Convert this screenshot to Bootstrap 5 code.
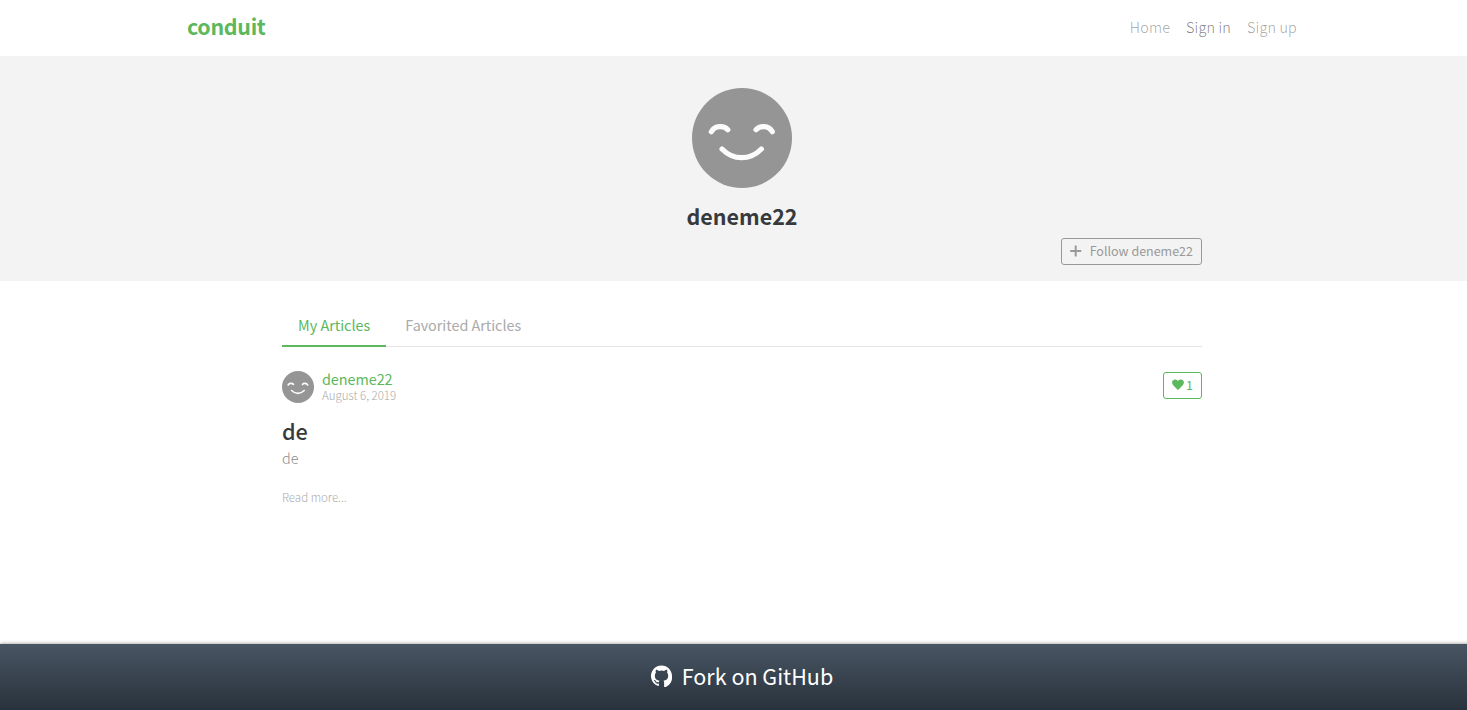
<!DOCTYPE html>
<html lang="en">
<head>
<meta charset="utf-8">
<meta name="viewport" content="width=device-width, initial-scale=1">
<title>Conduit</title>
<link href="https://cdn.jsdelivr.net/npm/bootstrap@5.3.0/dist/css/bootstrap.min.css" rel="stylesheet">
<style>
html { overflow: hidden; }
body { width: 1484px; height: 710px; overflow: hidden; font-family: "Noto Sans CJK SC", "Noto Sans", sans-serif; font-size: 14.4px; line-height: 24px; color: #373a3c; --green: #5cb85c; }
a { text-decoration: none; }
.container { max-width: 1140px; --bs-gutter-x: 30px; }
.container > .row { --bs-gutter-x: 30px; }
.topbar { height: 56px; padding: 0 0 2px; }
.brand { font-weight: 700; font-size: 21.4px; line-height: 34px; letter-spacing: -.3px; padding-bottom: 3px; color: var(--green); }
.topbar a:not(.brand) { font-weight: 300; color: rgba(0,0,0,.38); letter-spacing: .17px; }
.topbar a.current { color: rgba(0,0,0,.5) !important; }
.banner { height: 225px; background: #f3f3f3; padding-top: 32px; }
.banner h4 { font-size: 21.45px; line-height: 26px; font-weight: 700; margin: 15px 0 9px; }
.face { display: block; flex: none; }
.pill { display: inline-flex; align-items: center; height: 27px; border: 1px solid #999; border-radius: 3px; color: #999; font-size: 12.5px; line-height: 20px; padding: 0 8px 2px; background: transparent; }
.pill-green { color: #5cb85c; border: 1px solid #5cb85c; margin-top: 1px; }
.pill-green svg { margin-right: 2px; }
.tabs { height: 42px; border-bottom: 1px solid #e5e5e5; margin-top: 24px; }
.tabs a { height: 42px; padding: 8px 16px; color: #aaa; letter-spacing: -.03px; }
.tabs a.current { color: var(--green); border-bottom: 2px solid var(--green); margin-right: 3px; letter-spacing: 0; }
.author { line-height: 16px; color: var(--green); letter-spacing: -.05px; }
.date { font-size: 11.5px; line-height: 16px; font-weight: 300; color: #aaa; }
.post h1 { font-size: 21.6px; line-height: 26px; font-weight: 500; margin: 15px 0 2px; }
.post p { font-weight: 300; color: #8c8c8c; margin: 0 0 15px; }
.more { font-size: 11.5px; font-weight: 300; color: #aaa; }
.fork { height: 66px; background: linear-gradient(#485563, #29323c); box-shadow: 0 0 4px rgba(0,0,0,.45); color: #fff; font-size: 21.5px; line-height: 66px; padding-bottom: 2px; }
.fork svg { margin-right: 10px; }
</style>
</head>
<body class="d-flex flex-column">
<svg class="d-none">
  <symbol id="smile" viewBox="0 0 100 100"><circle cx="50" cy="50" r="50" fill="#959595"/><g fill="none" stroke="#fcfcfc" stroke-width="5.2" stroke-linecap="round"><path d="M19.300 43.700C23 37.300 32 37.300 35.800 41.700M64 41.700C68 37.300 76.500 37.300 80.300 43.700M30 61Q38.500 69.700 49.700 69.700T69.400 61"/></g></symbol>
</svg>
<nav class="navbar topbar">
  <div class="container">
    <a class="brand" href="#">conduit</a>
    <div class="d-flex gap-3"><a href="#">Home</a><a class="current" href="#">Sign in</a><a href="#">Sign up</a></div>
  </div>
</nav>
<header class="banner">
  <div class="container"><div class="row"><div class="col-10 offset-1 text-center">
    <svg class="face mx-auto" width="100" height="100"><use href="#smile"/></svg>
    <h4>deneme22</h4>
    <div class="d-flex justify-content-end"><button class="pill"><svg width="12" height="12" viewBox="0 0 12 12" class="me-2"><path d="M5.700.5v11M.2 6h11" stroke="#999" stroke-width="2"/></svg>Follow deneme22</button></div>
  </div></div></div>
</header>
<main class="container flex-grow-1">
  <div class="row"><div class="col-10 offset-1">
    <nav class="tabs d-flex"><a class="current" href="#">My Articles</a><a href="#">Favorited Articles</a></nav>
    <article class="post pt-4">
      <div class="d-flex align-items-start">
        <svg class="face" width="32" height="32"><use href="#smile"/></svg>
        <div class="ms-2"><div class="author">deneme22</div><div class="date">August 6, 2019</div></div>
        <button class="pill pill-green ms-auto"><svg width="12" height="11" viewBox="0 0 12 11"><path fill="#5cb85c" d="M6 2C4.800-.4.300-.2.100 3.200 0 6 3.200 8.300 6 10.900 8.800 8.300 12 6 11.900 3.200 11.700-.2 7.200-.4 6 2Z"/></svg>1</button>
      </div>
      <h1>de</h1>
      <p>de</p>
      <div class="more">Read more...</div>
    </article>
  </div></div>
</main>
<footer class="fork d-flex justify-content-center align-items-center">
  <svg width="21" height="22" viewBox="0 0 16 16" fill="#fff"><path d="M8 0C3.580 0 0 3.580 0 8c0 3.540 2.290 6.530 5.470 7.590.4.070.55-.17.55-.38 0-.19-.01-.82-.01-1.490-2.010.37-2.530-.49-2.690-.94-.09-.23-.48-.94-.82-1.130-.28-.15-.68-.52-.01-.53.63-.01 1.080.58 1.230.82.72 1.210 1.870.87 2.330.66.070-.52.28-.87.51-1.070-1.780-.2-3.640-.89-3.640-3.950 0-.87.31-1.590.82-2.150-.08-.2-.36-1.020.08-2.120 0 0 .67-.21 2.200.82a7.600 7.600 0 0 1 4 0c1.530-1.040 2.200-.82 2.200-.82.44 1.100.16 1.920.08 2.120.51.56.82 1.270.82 2.150 0 3.070-1.870 3.750-3.650 3.950.29.25.54.73.54 1.480v3.280c0 .21.15.46.55.38A8.010 8.010 0 0 0 16 8c0-4.420-3.580-8-8-8Z"/></svg>
  <span>Fork on GitHub</span>
</footer>
<script src="https://cdn.jsdelivr.net/npm/bootstrap@5.3.0/dist/js/bootstrap.bundle.min.js"></script>
</body>
</html>
